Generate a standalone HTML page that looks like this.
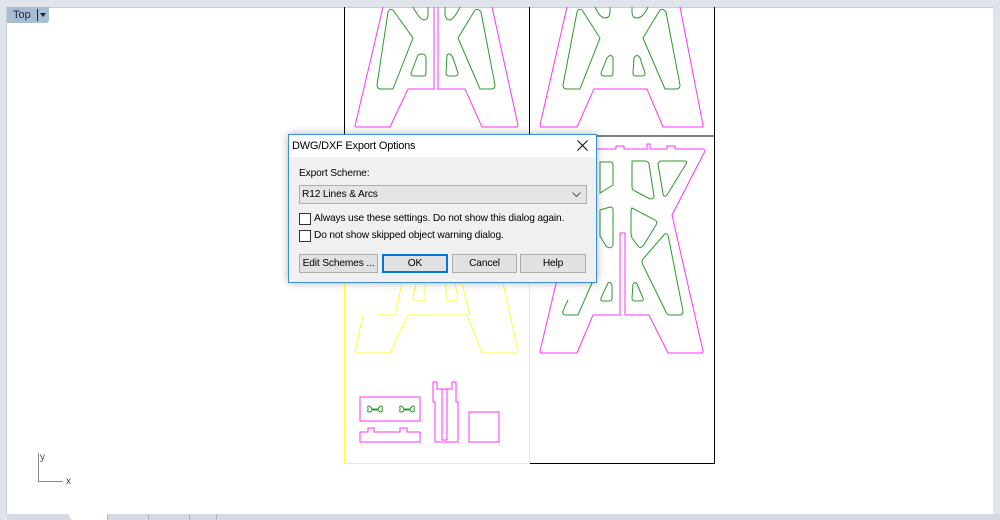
<!DOCTYPE html>
<html><head><meta charset="utf-8"><style>
*{margin:0;padding:0;box-sizing:border-box}
body{width:1000px;height:520px;overflow:hidden;background:#dfe3ea;font-family:"Liberation Sans",sans-serif;position:relative}
.vp{position:absolute;left:6px;top:7px;width:987px;height:507px;background:#fff;border-left:1px solid #c8ccd3;border-top:1px solid #c8ccd3}
.tag{position:absolute;left:7px;top:7px;width:42px;height:16px;background:#a8bcd4;font-size:11px;color:#1a2a40;border-radius:0 0 3px 0}
.tag span{position:absolute;left:6px;top:2px}
.tag i{position:absolute;left:30px;top:2px;width:1px;height:12px;background:#222}
.tag b{position:absolute;left:33px;top:6px;border:3px solid transparent;border-top:4px solid #222}
.dlg{position:absolute;left:288px;top:134px;width:309px;height:149px;background:#f0f0f0;border:1px solid #3b8ede;box-shadow:0 0 8px rgba(0,0,0,.3);font-size:10.2px;letter-spacing:-0.15px;color:#000}
.title{position:absolute;left:0;top:0;width:307px;height:22px;background:#fff}
.tt{position:absolute;left:3px;top:5px;font-size:11px;letter-spacing:-0.2px}
.x{position:absolute;left:288px;top:5px}
.t{position:absolute;white-space:nowrap}
.dd{position:absolute;left:10px;top:50px;width:288px;height:19px;background:#e5e5e5;border:1px solid #adadad}
.cb{position:absolute;left:10px;width:12px;height:12px;border:1px solid #333;background:#fff}
.btn{position:absolute;top:119px;height:19px;background:#e1e1e1;border:1px solid #adadad;text-align:center;line-height:17px;white-space:nowrap}
</style></head><body>
<div class="vp"></div>
<svg style="position:absolute;left:0;top:0" width="1000" height="520">
<g fill="none" stroke-width="1">
<path d="M344.5 7V136H529.5V7M529.5 7V136H714.5V7M529.5 136V463.5H714.5V136" stroke="#000"/>
<path d="M344.5 136V463.5H529.5V136" stroke="#ffff33"/>
<g stroke="#ff33ff">
<path d="M383 7L355 126Q355 127 357 127H390L408 89H434V7M438 7V89H465L482 127H516Q518 127 518 125L492 7"/>
<path d="M567 7L540 125Q540 127 542 127H577L594 89H647L663 127H701Q703 127 703 125L680 7"/>
<path d="M597 149H616V146H624V149H647V144H650V149H667V146H675V149H703Q705 149 705 151L672 215L703 351Q703 353 701 353H668L649 315H625V233H620V315H593L577 353H542Q540 353 540 351L564 250"/>
<path d="M360 397H420V421H360ZM360 432H368V428H374V432H400V428H407V432H420V442H360Z"/>
<path d="M433 382H437V389H452V382H456V402H458V442H435V402H433ZM442 389V440H447V389"/>
<path d="M469 412H499V442H469Z"/>
</g>
<g stroke="#2a9a2a">
<path d="M393 10Q390 8 388 12L377 85Q377 89 381 89H393L413 38Z"/>
<path d="M418 55L411 73Q411 76 414 76H424Q426 76 426 73V57Q424 52 418 55Z"/>
<path d="M413 7Q420 20 424 20Q428 20 428 15V7"/>
<path d="M475 10Q478 8 481 12L495 85Q495 89 491 89H480L458 38Z"/>
<path d="M447 55Q450 52 453 58L458 73Q458 76 455 76H449Q446 76 446 73Z"/>
<path d="M445 7V15Q446 20 450 20Q455 18 460 7"/>
<path d="M582 10Q579 8 577 12L563 85Q563 89 567 89H580L600 38Z"/>
<path d="M607 58L601 73Q601 76 604 76H611Q613 76 613 73V58Q611 53 607 58Z"/>
<path d="M595 7Q600 18 605 18Q610 18 610 12V7"/>
<path d="M660 10Q663 8 666 12L680 85Q680 89 676 89H665L643 38Z"/>
<path d="M634 58Q637 53 640 58L645 73Q645 76 642 76H636Q633 76 633 73Z"/>
<path d="M632 7V12Q632 18 637 18Q643 18 648 7"/>
<path d="M600 162H610Q613 162 613 165V185L600 193Z"/>
<path d="M600 210L610 207Q613 207 613 210V245Q611 250 606 246L600 236Z"/>
<path d="M632 161H645Q648 161 649 164L654 196Q654 199 650 199L635 191Q632 190 632 187Z"/>
<path d="M660 161H685Q688 161 686 164L667 195Q664 198 663 194L658 164Z"/>
<path d="M632 208L655 220Q658 222 656 225L643 246Q640 249 638 246L632 238Q631 236 631 233V211Z"/>
<path d="M663 236Q666 232 668 235L683 311Q683 315 680 315H670Q667 315 666 312L643 265Q641 262 643 259Z"/>
<path d="M608 283L601 298Q600 301 603 301H610Q612 301 612 298V285Q610 281 608 283Z"/>
<path d="M633 284Q635 281 637 284L643 298Q644 301 641 301H635Q632 301 632 298Z"/>
<path d="M568 300L563 311Q562 315 566 315H578L592 283"/>
<path d="M368 408Q367 406 369 406Q371 407 372 409H378Q379 407 381 406Q383 406 382 409Q383 411 381 412Q379 412 378 410H372Q371 412 369 412Q367 412 368 410Z"/>
<path d="M400 408Q399 406 401 406Q403 407 404 409H410Q411 407 413 406Q415 406 414 409Q415 411 413 412Q411 412 410 410H404Q403 412 401 412Q399 412 400 410Z"/>
</g>
<g stroke="#ffff33">
<path d="M503 283L518 351Q518 353 516 353H482L467 315H408L390 353H357Q355 353 355 351L363 315"/>
<path d="M377 315H395L402 283M462 283L470 315"/>
<path d="M416 283L413 298Q413 301 416 301H424Q425 301 425 298V283"/>
<path d="M446 283V298Q446 301 448 301H456Q458 301 458 298L455 283"/>
</g>
<path d="M38.5 453V481.5H63" stroke="#888"/>
</g>
<text x="40" y="460" font-size="10" fill="#444" font-family="Liberation Sans">y</text>
<text x="66" y="484" font-size="10" fill="#444" font-family="Liberation Sans">x</text>
<rect x="7" y="514" width="993" height="6" fill="#d4d9e2"/>
<path d="M68 514H107V520H72Z" fill="#fff"/>
<path d="M107.5 514V520M148.5 514V520M189.5 514V520M216.5 514V520" stroke="#aeb4be"/>
</svg>
<div class="tag"><span>Top</span><i></i><b></b></div>
<div class="dlg">
<div class="title"><span class="tt">DWG/DXF Export Options</span><svg class="x" width="11" height="11"><path d="M0.5 0.5L10.5 10.5M10.5 0.5L0.5 10.5" stroke="#111" stroke-width="1.1"/></svg></div>
<div class="t" style="left:10px;top:33px">Export Scheme:</div>
<div class="dd"><span class="t" style="left:2px;top:3px">R12 Lines &amp; Arcs</span><svg style="position:absolute;right:5px;top:6px" width="9" height="6"><path d="M0.5 0.5L4.5 4.5L8.5 0.5" fill="none" stroke="#555"/></svg></div>
<div class="cb" style="top:78px"></div><div class="t" style="left:25px;top:78px">Always use these settings. Do not show this dialog again.</div>
<div class="cb" style="top:95px"></div><div class="t" style="left:25px;top:95px">Do not show skipped object warning dialog.</div>
<div class="btn" style="left:10px;width:79px">Edit Schemes ...</div>
<div class="btn" style="left:93px;width:66px;border:2px solid #0078d7;line-height:15px">OK</div>
<div class="btn" style="left:163px;width:65px">Cancel</div>
<div class="btn" style="left:231px;width:66px">Help</div>
</div>
</body></html>
